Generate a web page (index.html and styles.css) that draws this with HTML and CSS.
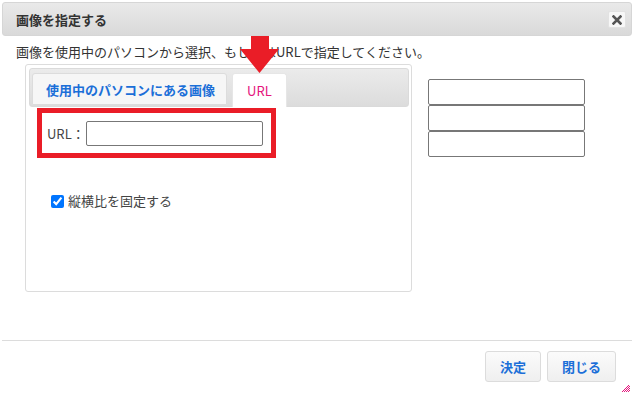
FILE: index.html
```html
<!DOCTYPE html>
<html lang="ja">
<head>
  <meta charset="UTF-8">
  <title>画像を指定する</title>
  <link rel="stylesheet" href="styles.css">
</head>
<body>

  <div class="dialog">
    <div class="titlebar">
      <span class="title">画像を指定する</span>
      <button type="button" class="close-btn" aria-label="close">
        <svg width="10" height="10" viewBox="0 0 10 10"><path d="M1.5 1.5 L8.5 8.5 M8.5 1.5 L1.5 8.5" stroke="#555" stroke-width="2.6" stroke-linecap="square"/></svg>
      </button>
    </div>

    <div class="dialog-body">
      <p class="lead">画像を使用中のパソコンから選択、もしくはURLで指定してください。</p>

      <div class="main-row">
        <div class="tabs">
          <div class="tab-head">
            <div class="tab">使用中のパソコンにある画像</div>
            <div class="tab active">URL</div>
          </div>
          <div class="tab-panel">
            <div class="url-row">
              <label for="url">URL：</label>
              <input type="text" id="url">
            </div>
            <div class="check-row">
              <input type="checkbox" id="keepRatio" checked>
              <label for="keepRatio">縦横比を固定する</label>
            </div>
          </div>
        </div>

        <div class="size-fields">
          <input type="text">
          <input type="text">
          <input type="text">
        </div>
      </div>
    </div>

    <div class="footer">
      <button type="button" class="btn">決定</button>
      <button type="button" class="btn">閉じる</button>
    </div>

    <!-- pointer arrow drawn over the text -->
    <svg class="arrow" width="40" height="38" viewBox="0 0 40 38">
      <polygon points="11,0 29,0 29,13 39,13 19.5,37 0,13 11,13" fill="#ea1d27"/>
    </svg>

    <svg class="grip" width="8" height="8" viewBox="0 0 8 8">
      <g fill="#e4147c">
        <rect x="6" y="0" width="1" height="1"/><rect x="5" y="1" width="1" height="1"/><rect x="7" y="1" width="1" height="1"/>
        <rect x="4" y="2" width="1" height="1"/><rect x="6" y="2" width="1" height="1"/><rect x="3" y="3" width="1" height="1"/>
        <rect x="5" y="3" width="1" height="1"/><rect x="7" y="3" width="1" height="1"/><rect x="2" y="4" width="1" height="1"/>
        <rect x="4" y="4" width="1" height="1"/><rect x="6" y="4" width="1" height="1"/><rect x="1" y="5" width="1" height="1"/>
        <rect x="3" y="5" width="1" height="1"/><rect x="5" y="5" width="1" height="1"/><rect x="7" y="5" width="1" height="1"/>
        <rect x="0" y="6" width="1" height="1"/><rect x="2" y="6" width="1" height="1"/><rect x="4" y="6" width="1" height="1"/>
        <rect x="6" y="6" width="1" height="1"/>
      </g>
    </svg>
  </div>

</body>
</html>
```

FILE: styles.css
```css
* {
  box-sizing: border-box;
}

body {
  margin: 0;
  background: #fff;
  font-family: "Noto Sans CJK JP", "Noto Sans", sans-serif;
  font-size: 13px;
  color: #333;
}

.dialog {
  position: relative;
  width: 634px;
  height: 397px;
  padding: 2px;
}

.titlebar {
  height: 34px;
  display: flex;
  align-items: center;
  justify-content: space-between;
  padding: 0 5px 0 13px;
  background: linear-gradient(#e9e9e9, #d9d9d9);
  border: 1px solid #d6d6d6;
  border-radius: 3px;
}

.title {
  font-weight: bold;
  font-size: 13px;
  color: #333;
}

.close-btn {
  width: 18px;
  height: 17px;
  padding: 0;
  margin-top: 1px;
  display: flex;
  align-items: center;
  justify-content: center;
  background: #f7f7f7;
  border: 1px solid #e2e2e2;
  border-radius: 2px;
}

.dialog-body {
  padding: 0 14px;
  height: 304px;
  overflow: hidden;
}

.lead {
  margin: 7px 0 0;
  line-height: 18px;
}

.main-row {
  display: flex;
  align-items: flex-start;
  margin-top: 3px;
}

.tabs {
  width: 387px;
  height: 228px;
  margin-left: 9px;
  padding: 3px 2px 3px 3px;
  border: 1px solid #dcdcdc;
  border-radius: 3px;
}

.tab-head {
  display: flex;
  align-items: flex-start;
  gap: 5px;
  height: 39px;
  padding: 4px 2px 0;
  background: linear-gradient(#ebebeb, #dcdcdc);
  border: 1px solid #dadada;
  border-radius: 3px;
}

.tab {
  height: 32px;
  padding: 0 11px 0 13px;
  display: flex;
  align-items: center;
  background: #f6f6f6;
  border: 1px solid #dcdcdc;
  border-radius: 3px 3px 0 0;
  font-weight: bold;
  color: #1b6fd8;
  white-space: nowrap;
}

.tab.active {
  height: 34px;
  padding: 0 14px;
  background: #fff;
  border-color: #e6e6e6;
  border-bottom: none;
  color: #e4147c;
  font-weight: normal;
}

.tab-panel {
  padding: 1px 0 0 8px;
}

.url-row {
  width: 239px;
  height: 50px;
  display: flex;
  align-items: center;
  padding: 0 0 0 5px;
  border: 5px solid #ea1d27;
}

.url-row label {
  width: 39px;
  color: #444;
}

.url-row input {
  width: 177px;
  height: 25px;
  border: 1px solid #777;
  border-radius: 2px;
  outline: none;
}

.check-row {
  display: flex;
  align-items: center;
  gap: 4px;
  margin: 34px 0 0 14px;
  line-height: 18px;
  color: #444;
}

.check-row input {
  width: 13px;
  height: 13px;
  margin: 0;
}

.size-fields {
  display: flex;
  flex-direction: column;
  margin: 15px 0 0 16px;
}

.size-fields input {
  width: 157px;
  height: 26px;
  border: 1px solid #777;
  border-radius: 2px;
  outline: none;
}

.footer {
  display: flex;
  justify-content: flex-end;
  gap: 6px;
  padding: 10px 16px 0 0;
  border-top: 1px solid #dcdcdc;
}

.btn {
  height: 31px;
  padding: 0 14px;
  background: linear-gradient(#fbfbfb, #efefef);
  border: 1px solid #dcdcdc;
  border-radius: 3px;
  font-family: inherit;
  font-size: 13px;
  font-weight: bold;
  color: #1b6fd8;
}

.arrow {
  position: absolute;
  left: 240px;
  top: 36px;
}

.grip {
  position: absolute;
  right: 4px;
  bottom: 4px;
}
```
